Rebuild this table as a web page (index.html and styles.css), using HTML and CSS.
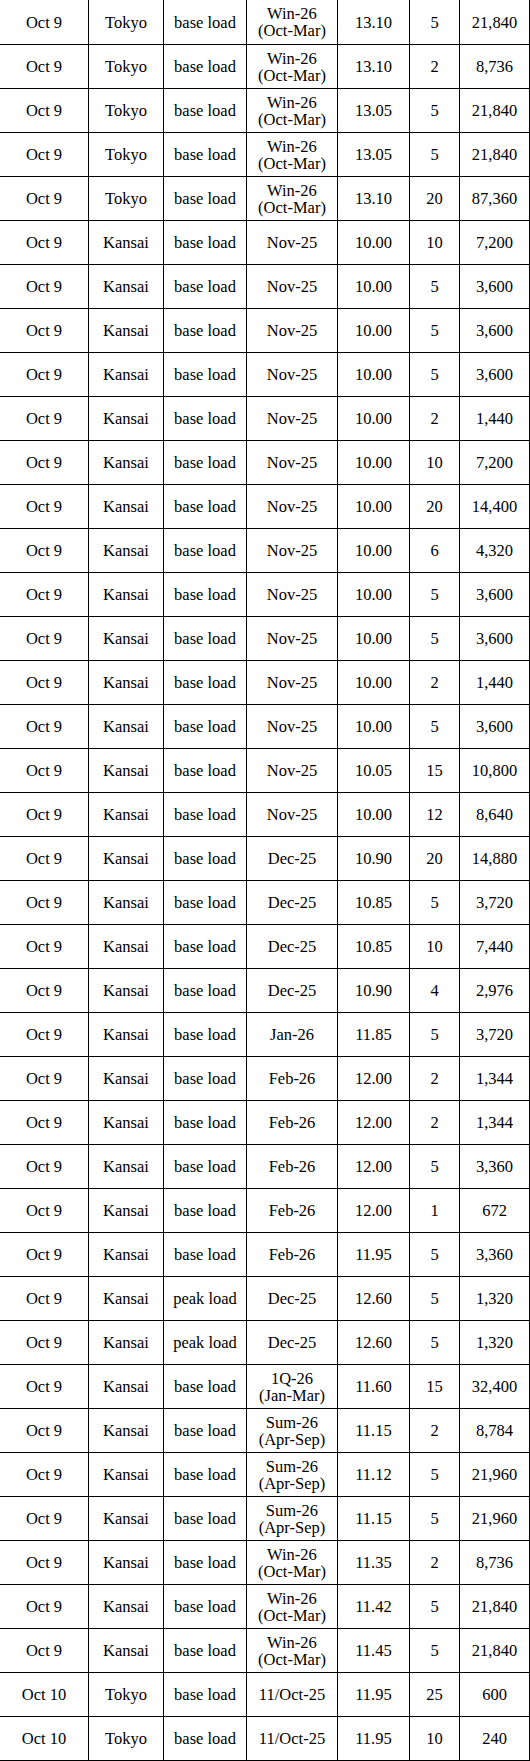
FILE: index.html
```html
<!DOCTYPE html>
<html>
<head>
<meta charset="utf-8">
<link rel="stylesheet" href="styles.css">
</head>
<body>
<div class="table">
<div class="row"><div class="cell">Oct 9</div><div class="cell">Tokyo</div><div class="cell">base load</div><div class="cell">Win-26<br>(Oct-Mar)</div><div class="cell">13.10</div><div class="cell">5</div><div class="cell">21,840</div></div>
<div class="row"><div class="cell">Oct 9</div><div class="cell">Tokyo</div><div class="cell">base load</div><div class="cell">Win-26<br>(Oct-Mar)</div><div class="cell">13.10</div><div class="cell">2</div><div class="cell">8,736</div></div>
<div class="row"><div class="cell">Oct 9</div><div class="cell">Tokyo</div><div class="cell">base load</div><div class="cell">Win-26<br>(Oct-Mar)</div><div class="cell">13.05</div><div class="cell">5</div><div class="cell">21,840</div></div>
<div class="row"><div class="cell">Oct 9</div><div class="cell">Tokyo</div><div class="cell">base load</div><div class="cell">Win-26<br>(Oct-Mar)</div><div class="cell">13.05</div><div class="cell">5</div><div class="cell">21,840</div></div>
<div class="row"><div class="cell">Oct 9</div><div class="cell">Tokyo</div><div class="cell">base load</div><div class="cell">Win-26<br>(Oct-Mar)</div><div class="cell">13.10</div><div class="cell">20</div><div class="cell">87,360</div></div>
<div class="row"><div class="cell">Oct 9</div><div class="cell">Kansai</div><div class="cell">base load</div><div class="cell">Nov-25</div><div class="cell">10.00</div><div class="cell">10</div><div class="cell">7,200</div></div>
<div class="row"><div class="cell">Oct 9</div><div class="cell">Kansai</div><div class="cell">base load</div><div class="cell">Nov-25</div><div class="cell">10.00</div><div class="cell">5</div><div class="cell">3,600</div></div>
<div class="row"><div class="cell">Oct 9</div><div class="cell">Kansai</div><div class="cell">base load</div><div class="cell">Nov-25</div><div class="cell">10.00</div><div class="cell">5</div><div class="cell">3,600</div></div>
<div class="row"><div class="cell">Oct 9</div><div class="cell">Kansai</div><div class="cell">base load</div><div class="cell">Nov-25</div><div class="cell">10.00</div><div class="cell">5</div><div class="cell">3,600</div></div>
<div class="row"><div class="cell">Oct 9</div><div class="cell">Kansai</div><div class="cell">base load</div><div class="cell">Nov-25</div><div class="cell">10.00</div><div class="cell">2</div><div class="cell">1,440</div></div>
<div class="row"><div class="cell">Oct 9</div><div class="cell">Kansai</div><div class="cell">base load</div><div class="cell">Nov-25</div><div class="cell">10.00</div><div class="cell">10</div><div class="cell">7,200</div></div>
<div class="row"><div class="cell">Oct 9</div><div class="cell">Kansai</div><div class="cell">base load</div><div class="cell">Nov-25</div><div class="cell">10.00</div><div class="cell">20</div><div class="cell">14,400</div></div>
<div class="row"><div class="cell">Oct 9</div><div class="cell">Kansai</div><div class="cell">base load</div><div class="cell">Nov-25</div><div class="cell">10.00</div><div class="cell">6</div><div class="cell">4,320</div></div>
<div class="row"><div class="cell">Oct 9</div><div class="cell">Kansai</div><div class="cell">base load</div><div class="cell">Nov-25</div><div class="cell">10.00</div><div class="cell">5</div><div class="cell">3,600</div></div>
<div class="row"><div class="cell">Oct 9</div><div class="cell">Kansai</div><div class="cell">base load</div><div class="cell">Nov-25</div><div class="cell">10.00</div><div class="cell">5</div><div class="cell">3,600</div></div>
<div class="row"><div class="cell">Oct 9</div><div class="cell">Kansai</div><div class="cell">base load</div><div class="cell">Nov-25</div><div class="cell">10.00</div><div class="cell">2</div><div class="cell">1,440</div></div>
<div class="row"><div class="cell">Oct 9</div><div class="cell">Kansai</div><div class="cell">base load</div><div class="cell">Nov-25</div><div class="cell">10.00</div><div class="cell">5</div><div class="cell">3,600</div></div>
<div class="row"><div class="cell">Oct 9</div><div class="cell">Kansai</div><div class="cell">base load</div><div class="cell">Nov-25</div><div class="cell">10.05</div><div class="cell">15</div><div class="cell">10,800</div></div>
<div class="row"><div class="cell">Oct 9</div><div class="cell">Kansai</div><div class="cell">base load</div><div class="cell">Nov-25</div><div class="cell">10.00</div><div class="cell">12</div><div class="cell">8,640</div></div>
<div class="row"><div class="cell">Oct 9</div><div class="cell">Kansai</div><div class="cell">base load</div><div class="cell">Dec-25</div><div class="cell">10.90</div><div class="cell">20</div><div class="cell">14,880</div></div>
<div class="row"><div class="cell">Oct 9</div><div class="cell">Kansai</div><div class="cell">base load</div><div class="cell">Dec-25</div><div class="cell">10.85</div><div class="cell">5</div><div class="cell">3,720</div></div>
<div class="row"><div class="cell">Oct 9</div><div class="cell">Kansai</div><div class="cell">base load</div><div class="cell">Dec-25</div><div class="cell">10.85</div><div class="cell">10</div><div class="cell">7,440</div></div>
<div class="row"><div class="cell">Oct 9</div><div class="cell">Kansai</div><div class="cell">base load</div><div class="cell">Dec-25</div><div class="cell">10.90</div><div class="cell">4</div><div class="cell">2,976</div></div>
<div class="row"><div class="cell">Oct 9</div><div class="cell">Kansai</div><div class="cell">base load</div><div class="cell">Jan-26</div><div class="cell">11.85</div><div class="cell">5</div><div class="cell">3,720</div></div>
<div class="row"><div class="cell">Oct 9</div><div class="cell">Kansai</div><div class="cell">base load</div><div class="cell">Feb-26</div><div class="cell">12.00</div><div class="cell">2</div><div class="cell">1,344</div></div>
<div class="row"><div class="cell">Oct 9</div><div class="cell">Kansai</div><div class="cell">base load</div><div class="cell">Feb-26</div><div class="cell">12.00</div><div class="cell">2</div><div class="cell">1,344</div></div>
<div class="row"><div class="cell">Oct 9</div><div class="cell">Kansai</div><div class="cell">base load</div><div class="cell">Feb-26</div><div class="cell">12.00</div><div class="cell">5</div><div class="cell">3,360</div></div>
<div class="row"><div class="cell">Oct 9</div><div class="cell">Kansai</div><div class="cell">base load</div><div class="cell">Feb-26</div><div class="cell">12.00</div><div class="cell">1</div><div class="cell">672</div></div>
<div class="row"><div class="cell">Oct 9</div><div class="cell">Kansai</div><div class="cell">base load</div><div class="cell">Feb-26</div><div class="cell">11.95</div><div class="cell">5</div><div class="cell">3,360</div></div>
<div class="row"><div class="cell">Oct 9</div><div class="cell">Kansai</div><div class="cell">peak load</div><div class="cell">Dec-25</div><div class="cell">12.60</div><div class="cell">5</div><div class="cell">1,320</div></div>
<div class="row"><div class="cell">Oct 9</div><div class="cell">Kansai</div><div class="cell">peak load</div><div class="cell">Dec-25</div><div class="cell">12.60</div><div class="cell">5</div><div class="cell">1,320</div></div>
<div class="row"><div class="cell">Oct 9</div><div class="cell">Kansai</div><div class="cell">base load</div><div class="cell">1Q-26<br>(Jan-Mar)</div><div class="cell">11.60</div><div class="cell">15</div><div class="cell">32,400</div></div>
<div class="row"><div class="cell">Oct 9</div><div class="cell">Kansai</div><div class="cell">base load</div><div class="cell">Sum-26<br>(Apr-Sep)</div><div class="cell">11.15</div><div class="cell">2</div><div class="cell">8,784</div></div>
<div class="row"><div class="cell">Oct 9</div><div class="cell">Kansai</div><div class="cell">base load</div><div class="cell">Sum-26<br>(Apr-Sep)</div><div class="cell">11.12</div><div class="cell">5</div><div class="cell">21,960</div></div>
<div class="row"><div class="cell">Oct 9</div><div class="cell">Kansai</div><div class="cell">base load</div><div class="cell">Sum-26<br>(Apr-Sep)</div><div class="cell">11.15</div><div class="cell">5</div><div class="cell">21,960</div></div>
<div class="row"><div class="cell">Oct 9</div><div class="cell">Kansai</div><div class="cell">base load</div><div class="cell">Win-26<br>(Oct-Mar)</div><div class="cell">11.35</div><div class="cell">2</div><div class="cell">8,736</div></div>
<div class="row"><div class="cell">Oct 9</div><div class="cell">Kansai</div><div class="cell">base load</div><div class="cell">Win-26<br>(Oct-Mar)</div><div class="cell">11.42</div><div class="cell">5</div><div class="cell">21,840</div></div>
<div class="row"><div class="cell">Oct 9</div><div class="cell">Kansai</div><div class="cell">base load</div><div class="cell">Win-26<br>(Oct-Mar)</div><div class="cell">11.45</div><div class="cell">5</div><div class="cell">21,840</div></div>
<div class="row"><div class="cell">Oct 10</div><div class="cell">Tokyo</div><div class="cell">base load</div><div class="cell">11/Oct-25</div><div class="cell">11.95</div><div class="cell">25</div><div class="cell">600</div></div>
<div class="row"><div class="cell">Oct 10</div><div class="cell">Tokyo</div><div class="cell">base load</div><div class="cell">11/Oct-25</div><div class="cell">11.95</div><div class="cell">10</div><div class="cell">240</div></div>
</div>
</body>
</html>
```

FILE: styles.css
```css
html, body {
  margin: 0;
  padding: 0;
  background: #fff;
}

.table {
  width: 530px;
  display: flex;
  flex-direction: column;
  gap: 1px;
  background: #000;
  padding: 0 1px 1px 0;
  box-sizing: border-box;
  font-family: "Liberation Serif", "Times New Roman", serif;
  font-size: 16.5px;
  line-height: 17px;
  color: #000;
}

.row {
  display: grid;
  grid-template-columns: 88px 74px 82px 90px 71px 49px 69px;
  gap: 1px;
  height: 43px;
}

.row:first-child {
  height: 44px;
}

.cell {
  background: #fff;
  display: flex;
  align-items: center;
  justify-content: center;
  text-align: center;
  white-space: nowrap;
}
```
